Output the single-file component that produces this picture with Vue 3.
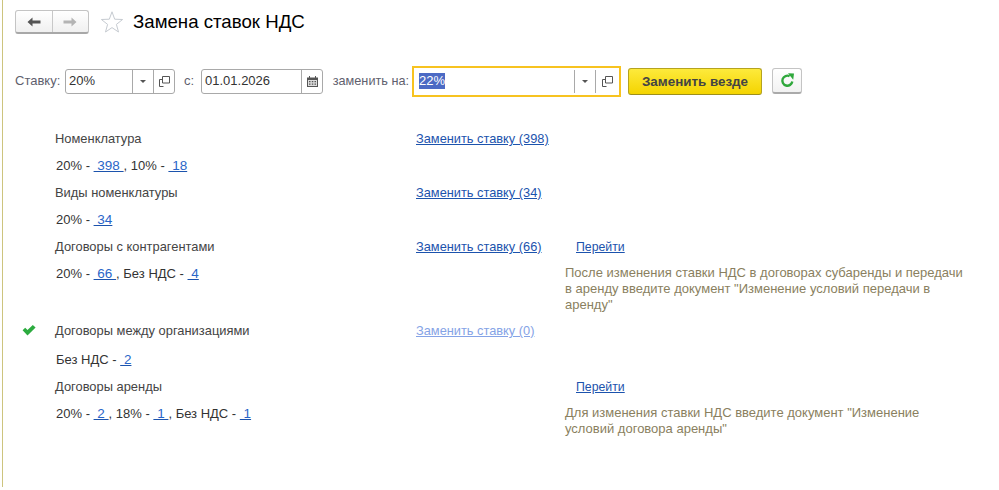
<template>
  <div class="page">
    <header class="head">
      <div class="nav">
        <button class="nav-btn">
          <svg width="14" height="10" viewBox="0 0 14 10"><path d="M0.5 5 L5.500 0.5 V3.400 H13.500 V6.600 H5.500 V9.500 Z" fill="#555"/></svg>
        </button>
        <button class="nav-btn">
          <svg width="14" height="10" viewBox="0 0 14 10"><path d="M13.500 5 L8.500 0.5 V3.400 H0.5 V6.600 H8.500 V9.500 Z" fill="#b4b4b4"/></svg>
        </button>
      </div>
      <svg class="star" width="24" height="24" viewBox="0 0 24 24"><path d="M12 1.800 L14.700 9.200 L22.600 9.500 L16.400 14.400 L18.500 22 L12 17.600 L5.500 22 L7.600 14.400 L1.400 9.500 L9.300 9.200 Z" fill="#fff" stroke="#c6cbd1" stroke-width="1"/></svg>
      <h1 class="title">Замена ставок НДС</h1>
    </header>

    <div class="filters">
      <label class="lbl">Ставку:</label>
      <div class="field rate">
        <span class="val">20%</span>
        <span class="cell"><i class="caret"></i></span>
        <span class="cell"><svg width="11" height="11" viewBox="0 0 11 11"><path d="M3.500 .5h7v6.500h-7zM3 3.500H.5v7h4" fill="none" stroke="#555"/></svg></span>
      </div>
      <label class="lbl lbl-c">с:</label>
      <div class="field date">
        <span class="val">01.01.2026</span>
        <span class="cell"><svg width="11" height="11" viewBox="0 0 11 11"><path d="M0 1.500h11v9.500h-11z" fill="#555"/><path d="M1 4h9v6h-9z" fill="#ddd"/><path d="M2.500 0v2.500M8.500 0v2.500" stroke="#555"/><path d="M2 5h1.500v1.200h-1.500zM4.800 5h1.500v1.200h-1.500zM7.500 5h1.500v1.200h-1.500zM2 7.500h1.500v1.200h-1.500zM4.800 7.500h1.500v1.200h-1.500zM7.500 7.500h1.500v1.200h-1.500z" fill="#555"/></svg></span>
      </div>
      <label class="lbl lbl-to">заменить на:</label>
      <div class="field target">
        <span class="val"><span class="sel">22%</span></span>
        <span class="cell"><i class="caret"></i></span>
        <span class="cell"><svg width="11" height="11" viewBox="0 0 11 11"><path d="M3.500 .5h7v6.500h-7zM3 3.500H.5v7h4" fill="none" stroke="#555"/></svg></span>
      </div>
      <button class="primary">Заменить везде</button>
      <button class="refresh">
        <svg width="15" height="15" viewBox="0 0 15 15"><path d="M12.300 8.500A5 5 0 1 1 9.600 3.200" fill="none" stroke="#2fa83c" stroke-width="2.400"/><path d="M8 .2 L14 .6 L13.200 6.800 Z" fill="#2fa83c"/></svg>
      </button>
    </div>

    <div class="rows">
      <div v-for="(r, i) in rows" :key="i" class="row" :class="r.cls">
        <div class="mark">
          <svg v-if="r.check" width="14" height="11" viewBox="0 0 14 11"><path d="M.6 5.200 L3.200 2.800 L5.500 5 L10.800 0 L13.600 2.600 L5.500 10.600 Z" fill="#2cab3f"/></svg>
        </div>
        <div class="main" :class="{ counts: r.parts }">
          <template v-if="r.label">{{ r.label }}</template>
          <template v-for="(p, j) in r.parts" :key="j">{{ p.t }}<a class="num">{{ p.n }}</a></template>
        </div>
        <div class="act"><a v-if="r.link" class="lnk" :class="{ off: r.off }">{{ r.link }}</a></div>
        <div class="extra">
          <a v-if="r.go" class="lnk go">Перейти</a>
          <p v-if="r.note" class="note">{{ r.note }}</p>
        </div>
      </div>
    </div>
  </div>
</template>

<script setup>
const rows = [
  { label: 'Номенклатура', link: 'Заменить ставку (398)' },
  { parts: [{ t: '20% - ', n: '\u00a0398\u00a0' }, { t: ', 10% - ', n: '\u00a018' }] },
  { label: 'Виды номенклатуры', link: 'Заменить ставку (34)' },
  { parts: [{ t: '20% - ', n: '\u00a034' }] },
  { label: 'Договоры с контрагентами', link: 'Заменить ставку (66)', go: true },
  {
    parts: [{ t: '20% - ', n: '\u00a066\u00a0' }, { t: ', Без НДС - ', n: '\u00a04' }],
    note: 'После изменения ставки НДС в договорах субаренды и передачи в аренду введите документ "Изменение условий передачи в аренду"',
    cls: 'tall'
  },
  { label: 'Договоры между организациями', link: 'Заменить ставку (0)', off: true, check: true, cls: 'gap' },
  { parts: [{ t: 'Без НДС - ', n: '\u00a02' }] },
  { label: 'Договоры аренды', go: true },
  {
    parts: [{ t: '20% - ', n: '\u00a02\u00a0' }, { t: ', 18% - ', n: '\u00a01\u00a0' }, { t: ', Без НДС - ', n: '\u00a01' }],
    note: 'Для изменения ставки НДС введите документ "Изменение условий договора аренды"'
  }
]
</script>

<style>
body { margin: 0; background: #fff; }
</style>

<style scoped>
.page {
  box-sizing: border-box;
  width: 997px;
  height: 487px;
  margin-left: 2px;
  border-left: 1px solid #cdc47e;
  font: 13px/16px "Liberation Sans", Arial, sans-serif;
  color: #4a4a4a;
  overflow: hidden;
}
.head {
  display: flex;
  align-items: center;
  height: 24px;
  padding: 10px 0 0 12px;
}
.nav {
  display: flex;
  box-sizing: border-box;
  width: 74px;
  height: 24px;
  border: 1px solid #c4c4c4;
  border-bottom: 2px solid #a8a8a8;
  border-radius: 3px;
  background: linear-gradient(#fff, #f0f0f0);
}
.nav-btn {
  flex: 1;
  display: flex;
  align-items: center;
  justify-content: center;
  padding: 0;
  border: 0;
  background: none;
}
.nav-btn + .nav-btn { border-left: 1px solid #c8c8c8; }
.star { margin-left: 11px; }
.title {
  margin: 0 0 0 9px;
  font-size: 18.67px;
  font-weight: 400;
  color: #000;
  line-height: 24px;
}
.filters {
  display: flex;
  align-items: center;
  height: 28px;
  margin-top: 33px;
  padding-left: 12px;
}
.lbl { color: #5f5f6e; }
.lbl:first-child { width: 50px; }
.lbl-c { width: 26px; padding-left: 2px; box-sizing: border-box; text-align: center; }
.lbl-to {
  width: 89px;
  padding-right: 3px;
  box-sizing: border-box;
  text-align: right;
  font-size: 12.7px;
}
.field {
  display: flex;
  box-sizing: border-box;
  height: 25px;
  border: 1px solid #a9a9a9;
  border-radius: 3px;
  background: #fff;
  align-items: stretch;
}
.val {
  flex: 1;
  display: flex;
  align-items: center;
  padding-left: 3px;
  color: #333;
}
.cell {
  width: 20px;
  display: flex;
  align-items: center;
  justify-content: center;
  border-left: 1px solid #a9a9a9;
}
.rate { width: 110px; }
.date { width: 122px; }
.target {
  width: 209px;
  height: 31px;
  border: 2px solid #f7c320;
  border-radius: 0;
  padding: 2px 0;
}
.target .val { padding-left: 5px; }
.target .cell:last-child { width: 23px; }
.sel { background: #4c6ac4; color: #fff; }
.caret {
  width: 0;
  height: 0;
  border: 3px solid transparent;
  border-top: 3px solid #555;
  border-bottom: 0;
}
.primary {
  box-sizing: border-box;
  width: 134px;
  height: 27px;
  margin-left: 7px;
  padding: 0;
  border: 1px solid #b5a31f;
  border-bottom-color: #9d8f1c;
  border-radius: 3px;
  background: linear-gradient(#fdea3c, #f4d400);
  font: bold 13.4px "Liberation Sans", Arial, sans-serif;
  color: #444;
}
.refresh {
  box-sizing: border-box;
  width: 30px;
  height: 26px;
  margin-left: 10px;
  padding: 0;
  display: flex;
  align-items: center;
  justify-content: center;
  border: 1px solid #c4c4c4;
  border-bottom: 2px solid #aaa;
  border-radius: 3px;
  background: linear-gradient(#fff, #f2f2f2);
}
.rows { margin-top: 30px; }
.row {
  display: grid;
  grid-template-columns: 52px 361px 149px 1fr;
  grid-auto-rows: min-content;
  min-height: 27px;
  align-items: start;
}
.row.tall { min-height: 57px; }
.row.gap { min-height: 29px; }
.mark {
  height: 27px;
  display: flex;
  align-items: center;
  padding-left: 19px;
}
.main, .act, .extra { line-height: 27px; }
.main { color: #444; font-size: 12.9px; }
.counts { padding-left: 1px; color: #333; font-size: 13px; }
.num {
  font-size: 13.5px;
  line-height: 16px;
  color: #2a66c8;
  text-decoration: underline;
  text-decoration-color: #1c53ad;
}
.lnk {
  font-size: 12.8px;
  line-height: 16px;
  color: #1c53ad;
  text-decoration: underline;
}
.lnk.off { color: #85a3e6; }
.go { margin-left: 11px; font-size: 12.3px; }
.note {
  margin: 5px 0 0;
  width: 400px;
  line-height: 16px;
  color: #8a7f60;
}
</style>
